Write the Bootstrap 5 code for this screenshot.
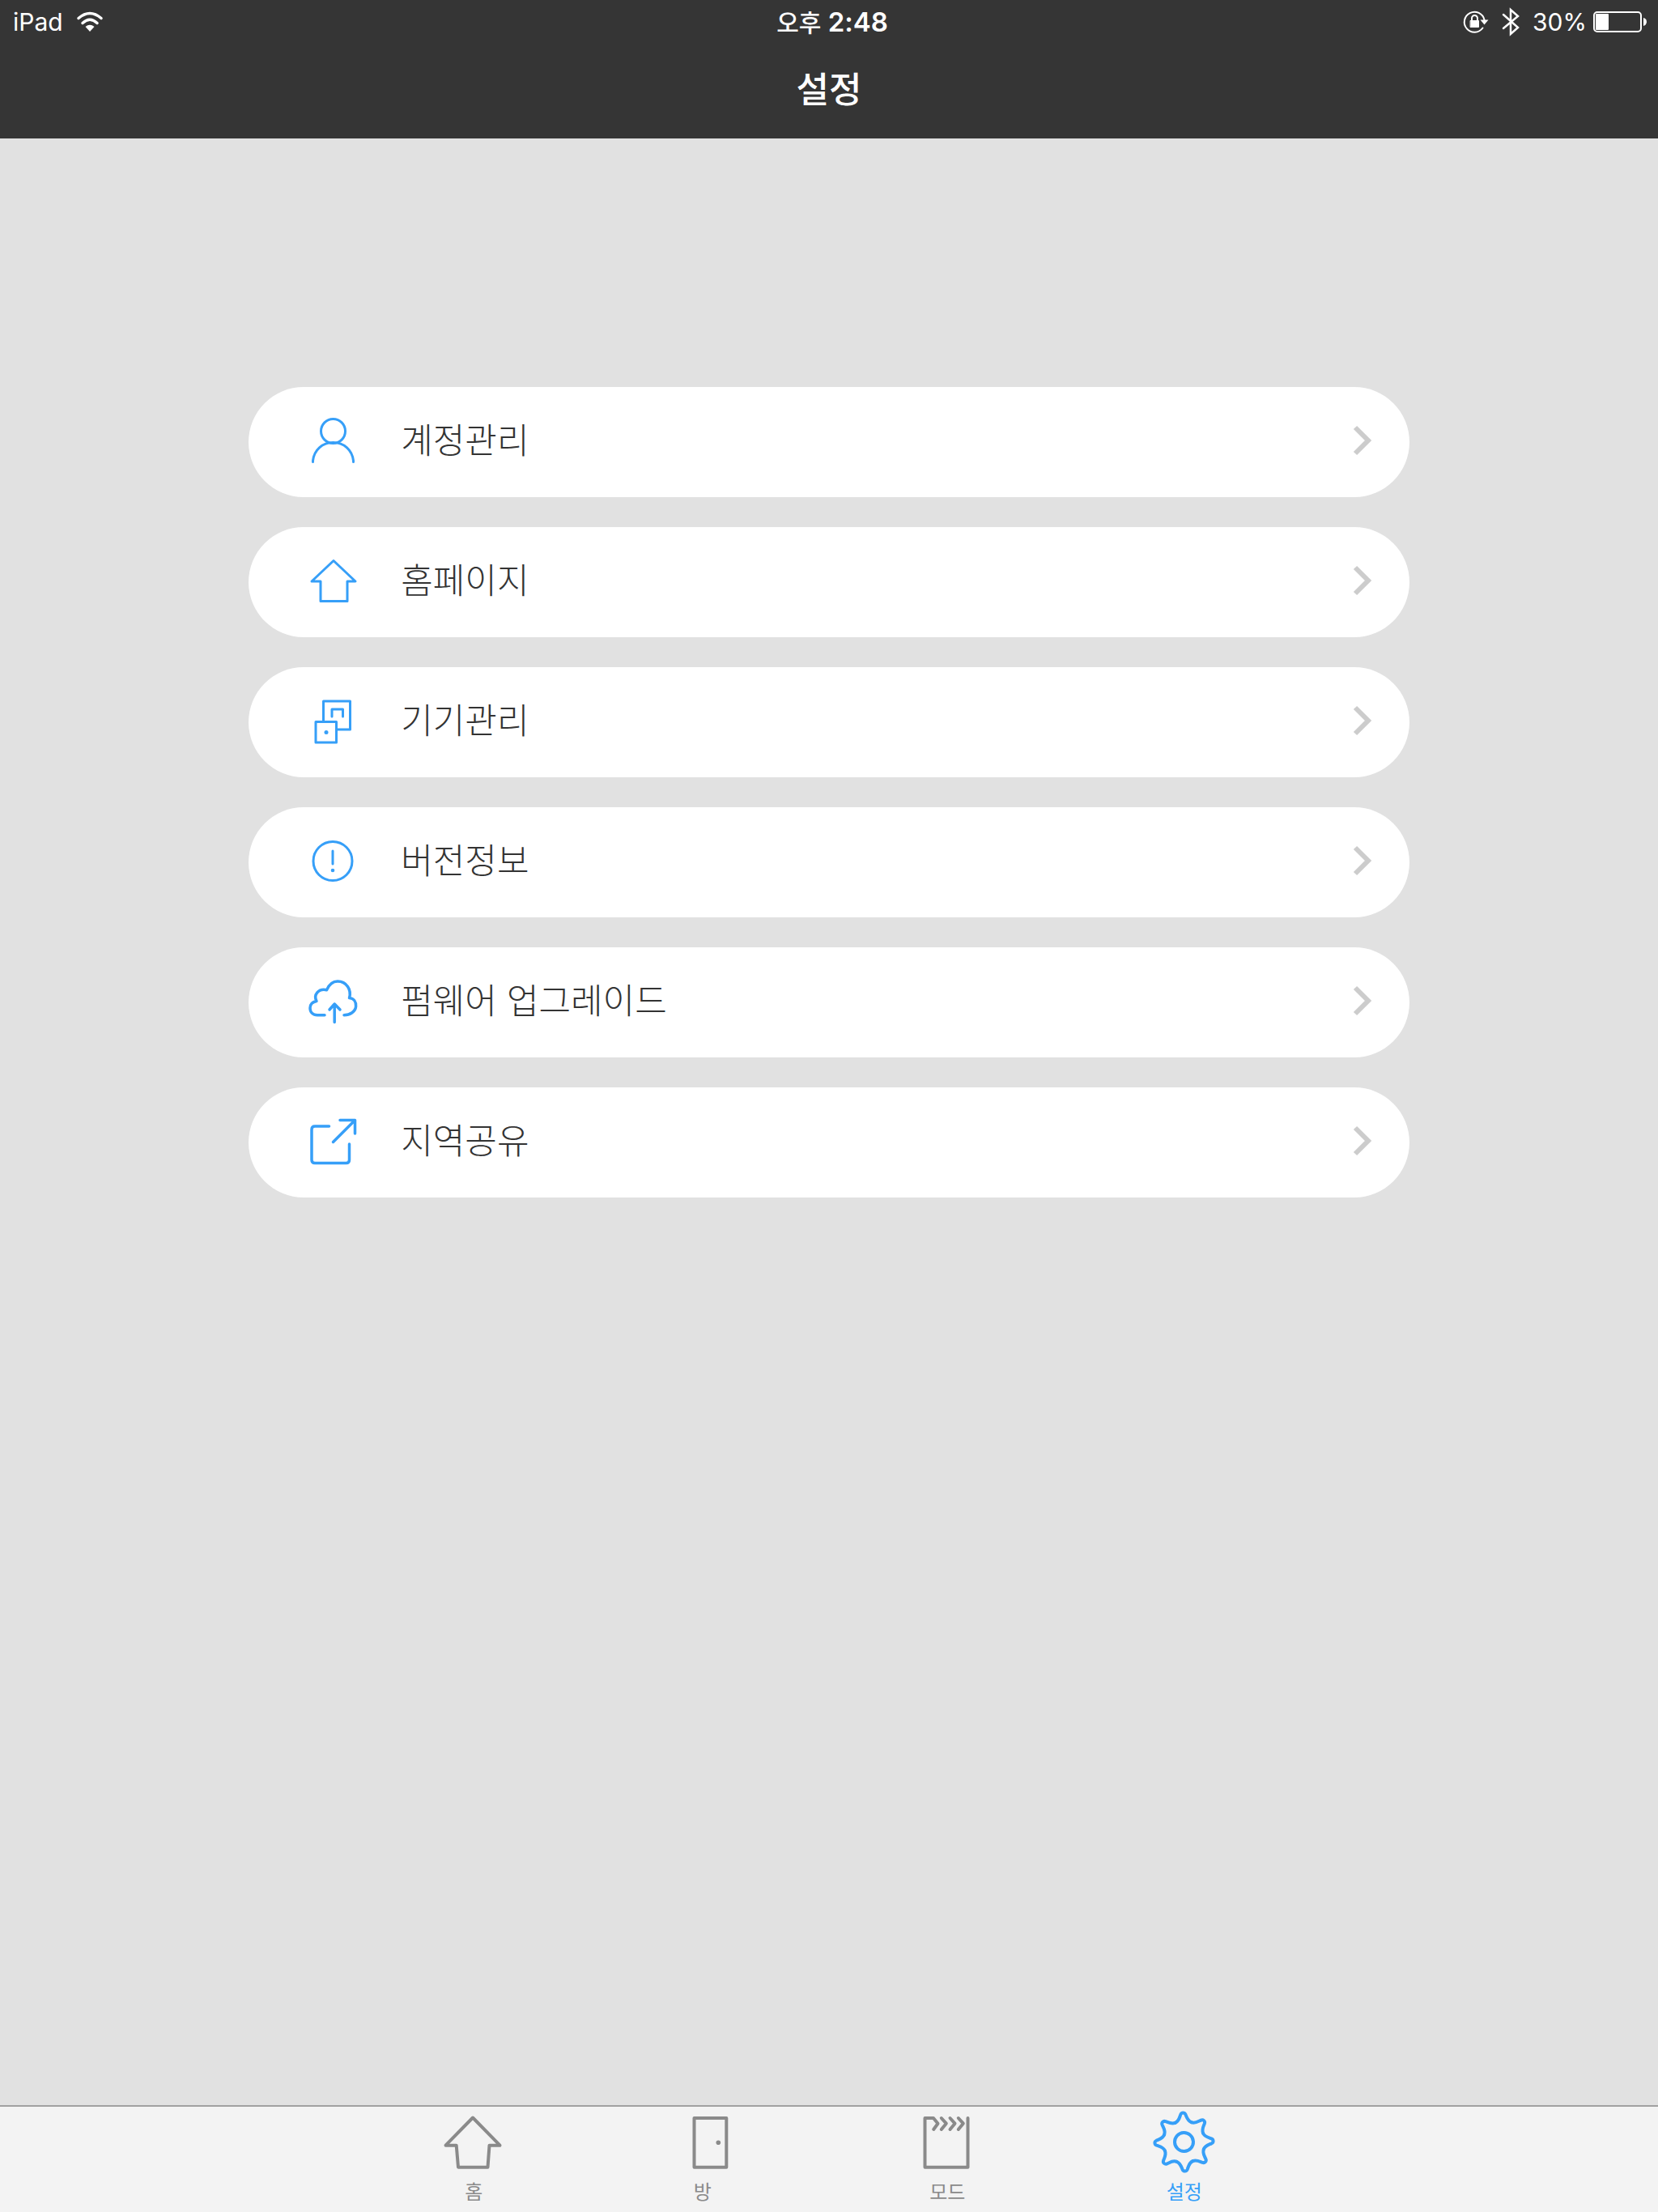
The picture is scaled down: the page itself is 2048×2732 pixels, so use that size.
<!DOCTYPE html>
<html lang="ko">
<head>
<meta charset="utf-8">
<meta name="viewport" content="width=device-width, initial-scale=1">
<title>설정</title>
<link href="https://cdn.jsdelivr.net/npm/bootstrap@5.3.0/dist/css/bootstrap.min.css" rel="stylesheet">
<style>
  body { background: #e1e1e1; font-family: "Noto Sans CJK KR", sans-serif; }
  svg { display: block; flex: none; overflow: visible; fill: none; stroke: currentColor; stroke-linecap: round; stroke-linejoin: round; }
  .app-head { background: #353535; color: #fff; }
  .status-bar { height: 54px; padding: 0 14px 0 16px; font: 400 30px/54px Inter, "Noto Sans CJK KR", sans-serif; }
  .status-side { flex: 1 1 0; }
  .status-time { font-size: 33px; font-weight: 600; padding-left: 6px; }
  .status-time span { font: 500 30px/30px "Noto Sans CJK KR", sans-serif; }
  .app-title { font-size: 44px; line-height: 60px; font-weight: 500; padding: 24px 0 33px; }
  .settings { padding-top: 307px; }
  .settings-list { width: 70%; gap: 37px; }
  .settings-item { min-height: 136px; border-radius: 68px; background: #fff; color: #333; font-size: 43px; font-weight: 300; line-height: 60px; padding: 0 46px 4px 72px; gap: 52px; }
  .settings-item span { padding-bottom: 6px; }
  .settings-item svg:first-child { color: #369ff8; stroke-width: 3px; }
  .settings-item .chevron { color: #ccc; stroke-width: 6px; stroke-linecap: butt; stroke-linejoin: miter; }
  .tab-bar { background: #f3f3f3; border-top: 2px solid #a0a0a0; }
  .tab-set { max-width: 1170px; }
  .tab-item { color: #8a8a8a; font-size: 24px; line-height: 34px; padding: 4px 0 9px; gap: 3px; }
  .tab-item svg { stroke-width: 4px; }
  .tab-item.active { color: #369ff8; }
</style>
<script src="https://cdn.jsdelivr.net/npm/bootstrap@5.3.0/dist/js/bootstrap.bundle.min.js"></script>
</head>
<body class="d-flex flex-column min-vh-100">

<header class="app-head">
  <div class="status-bar d-flex align-items-center">
    <div class="status-side d-flex align-items-center gap-3">
      <span>iPad</span>
      <svg width="34" height="26" viewBox="0 0 34 26">
        <path d="M3 8.500Q17-3.500 31 8.500M8 14.500Q17 6 26 14.500" stroke-width="3.500"/>
        <path d="M17 25 11.500 19Q17 14.500 22.500 19Z" fill="currentColor" stroke="none"/>
      </svg>
    </div>
    <div class="status-time"><span>오후</span> 2:48</div>
    <div class="status-side d-flex align-items-center justify-content-end">
      <svg class="me-3" width="32" height="28" viewBox="0 0 32 28">
        <path d="M24.500 21.500A12.500 12.500 0 1 1 26.500 11.500" stroke-width="2"/>
        <path d="M21.500 11.500H31.500L26.500 17.500Z" fill="currentColor" stroke="none"/>
        <path d="M9.500 12.500H19.500V20.500H9.500Z" fill="currentColor" stroke-width="1"/>
        <path d="M11 12V9.500A3.500 3.500 0 0 1 18 9.500V12" stroke-width="2"/>
      </svg>
      <svg class="me-3" width="22" height="36" viewBox="0 0 22 36">
        <path d="M2 9 20 25 11 33V3L20 11 2 26" stroke-width="2.500" stroke-linejoin="miter"/>
      </svg>
      <span class="me-2">30%</span>
      <svg width="66" height="26" viewBox="0 0 66 26">
        <rect x="1" y="1" width="58" height="24" rx="4" stroke-width="2"/>
        <rect x="3" y="3" width="16" height="20" rx="1" fill="currentColor" stroke="none"/>
        <path d="M62 8Q66 9 66 13 66 17 62 18Z" fill="currentColor" stroke="none"/>
      </svg>
    </div>
  </div>
  <h1 class="app-title text-center m-0">설정</h1>
</header>

<main class="settings flex-grow-1">
  <div class="settings-list d-flex flex-column mx-auto">
    <a href="#" class="settings-item d-flex align-items-center text-decoration-none">
      <svg width="64" height="64" viewBox="0 0 64 64"><circle cx="32.500" cy="20.500" r="15"/><path d="M7.500 58.500V57C9 44 19 34.500 32.500 34.500S56 44 57.500 57V58.500"/></svg>
      <span class="flex-grow-1">계정관리</span>
      <svg class="chevron" width="24" height="40" viewBox="0 0 24 40"><path d="M3 4 19 20 3 36"/></svg>
    </a>
    <a href="#" class="settings-item d-flex align-items-center text-decoration-none">
      <svg width="64" height="64" viewBox="0 0 64 64"><path d="M33 7.500 60 33H50V57.500H17V33H6Z"/></svg>
      <span class="flex-grow-1">홈페이지</span>
      <svg class="chevron" width="24" height="40" viewBox="0 0 24 40"><path d="M3 4 19 20 3 36"/></svg>
    </a>
    <a href="#" class="settings-item d-flex align-items-center text-decoration-none">
      <svg width="64" height="64" viewBox="0 0 64 64"><path d="M20.500 33V8H53.500V43H37M11 33.500H36.500V59H11ZM31 27V18H44.500V27"/><circle cx="24" cy="46.500" r="2.500" fill="currentColor" stroke="none"/></svg>
      <span class="flex-grow-1">기기관리</span>
      <svg class="chevron" width="24" height="40" viewBox="0 0 24 40"><path d="M3 4 19 20 3 36"/></svg>
    </a>
    <a href="#" class="settings-item d-flex align-items-center text-decoration-none">
      <svg width="64" height="64" viewBox="0 0 64 64"><circle cx="32" cy="32.500" r="24"/><path d="M32 20V36"/><circle cx="32" cy="44" r="2.300" fill="currentColor" stroke="none"/></svg>
      <span class="flex-grow-1">버전정보</span>
      <svg class="chevron" width="24" height="40" viewBox="0 0 24 40"><path d="M3 4 19 20 3 36"/></svg>
    </a>
    <a href="#" class="settings-item d-flex align-items-center text-decoration-none">
      <svg width="64" height="64" viewBox="0 0 64 64"><path d="M22 49.700H13C7.500 49.700 4 46 4 41 4 36.500 7 33.500 12 32.500 8 25 14 16.500 24.500 18.700 27.500 12 32 8 38 8 49 8 55.500 18.500 52.500 28.500 58 29 61 33.500 60.600 39 60 45.500 53.500 49.700 46 49.700M34.200 36V58.500M28 43 34.200 36 41 43" stroke-width="3.500"/></svg>
      <span class="flex-grow-1">펌웨어 업그레이드</span>
      <svg class="chevron" width="24" height="40" viewBox="0 0 24 40"><path d="M3 4 19 20 3 36"/></svg>
    </a>
    <a href="#" class="settings-item d-flex align-items-center text-decoration-none">
      <svg width="64" height="64" viewBox="0 0 64 64"><path d="M27.500 14H10Q6 14 6 18V55.500Q6 59.500 10 59.500H48.500Q52.500 59.500 52.500 55.500V36M32.500 33.500 59.500 6.500M41 6.500H59.500V23" stroke-width="3.500"/></svg>
      <span class="flex-grow-1">지역공유</span>
      <svg class="chevron" width="24" height="40" viewBox="0 0 24 40"><path d="M3 4 19 20 3 36"/></svg>
    </a>
  </div>
</main>

<nav class="tab-bar">
  <div class="tab-set d-flex mx-auto">
    <a href="#" class="tab-item col-3 d-flex flex-column align-items-center text-decoration-none">
      <svg width="80" height="80" viewBox="0 0 80 80"><path d="M39 9.500 72.500 43.700H59.500L57.500 70.700H21L18.700 43.700H5.500Z"/></svg>
      <span>홈</span>
    </a>
    <a href="#" class="tab-item col-3 d-flex flex-column align-items-center text-decoration-none">
      <svg width="80" height="80" viewBox="0 0 80 80"><path d="M19.500 10H59.300V70.700H19.500Z"/><circle cx="49.300" cy="40.300" r="2.800" fill="currentColor" stroke="none"/></svg>
      <span>방&nbsp;&nbsp;&nbsp;</span>
    </a>
    <a href="#" class="tab-item col-3 d-flex flex-column align-items-center text-decoration-none">
      <svg width="80" height="80" viewBox="0 0 80 80"><path d="M65.500 10V70.700H12.500V10H23L28.500 16.700 23.200 24M32.800 10 38.800 16.700 32.800 24M43.500 10 49.500 16.700 43.500 24M53.800 10 59.800 16.700 53.800 24"/></svg>
      <span>모드</span>
    </a>
    <a href="#" class="tab-item active col-3 d-flex flex-column align-items-center text-decoration-none" aria-current="page">
      <svg width="80" height="80" viewBox="0 0 80 80">
        <g transform="translate(39.500 39.500) rotate(-2)">
          <circle r="11.500"/>
          <path id="tooth" d="M-9.900-24C-5.400-25.900-4.800-29.500-3-34-1.800-36.800 1.800-36.800 3-34 4.800-29.500 5.400-25.900 9.900-24"/>
          <use href="#tooth" transform="rotate(45)"/><use href="#tooth" transform="rotate(90)"/>
          <use href="#tooth" transform="rotate(135)"/><use href="#tooth" transform="rotate(180)"/>
          <use href="#tooth" transform="rotate(225)"/><use href="#tooth" transform="rotate(270)"/>
          <use href="#tooth" transform="rotate(315)"/>
        </g>
      </svg>
      <span>설정</span>
    </a>
  </div>
</nav>

</body>
</html>
